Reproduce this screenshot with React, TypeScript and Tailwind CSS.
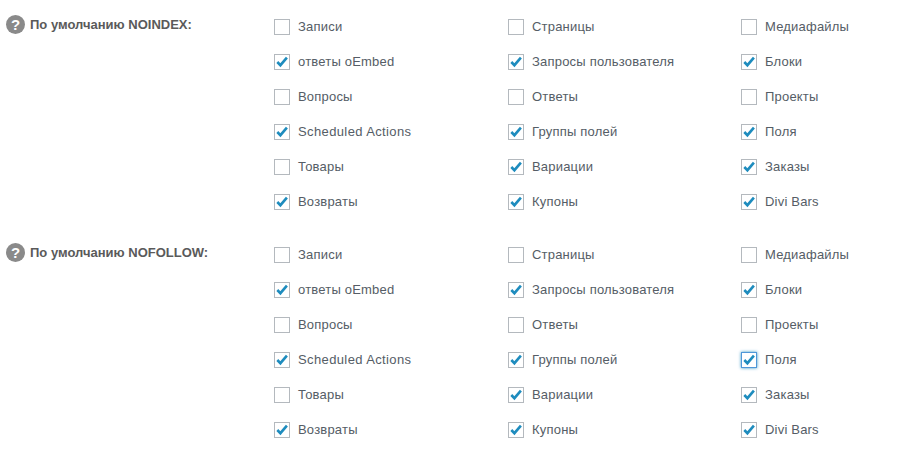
const rows: [string, boolean][][] = [
  [["Записи", false], ["Страницы", false], ["Медиафайлы", false]],
  [["ответы oEmbed", true], ["Запросы пользователя", true], ["Блоки", true]],
  [["Вопросы", false], ["Ответы", false], ["Проекты", false]],
  [["Scheduled Actions", true], ["Группы полей", true], ["Поля", true]],
  [["Товары", false], ["Вариации", true], ["Заказы", true]],
  [["Возвраты", true], ["Купоны", true], ["Divi Bars", true]],
];

function Check({ label, checked, focused }: { label: string; checked: boolean; focused?: boolean }) {
  return (
    <div className="flex items-center h-[35px]">
      <span
        className={
          focused
            ? "w-4 h-4 shrink-0 border border-[#4f97d8] shadow-[0_0_3px_rgba(30,140,190,0.9)] bg-white flex items-center justify-center"
            : "w-4 h-4 shrink-0 border border-[#b4b9be] bg-white flex items-center justify-center"
        }
      >
        {checked && (
          <svg width="14" height="14" viewBox="0 0 14 14">
            <path d="M2.3 7 L5.4 10.2 L11.9 2.6" fill="none" stroke="#1e8cbe" strokeWidth="2.6" />
          </svg>
        )}
      </span>
      <span
        className={
          label === "Scheduled Actions"
            ? "ml-2 text-[13px] tracking-[0.38px] text-[#555d66]"
            : "ml-2 text-[13px] tracking-[0.2px] text-[#555d66]"
        }
      >
        {label}
      </span>
    </div>
  );
}

function Section({ title, focusLast }: { title: string; focusLast?: boolean }) {
  return (
    <div className="flex h-[228px]">
      <div className="w-[274px] shrink-0 pl-[6px] pt-[15px] flex items-start gap-[5px]">
        <span className="w-[19px] h-[19px] rounded-full bg-[#8a8a8a] text-white text-[15px] font-bold leading-[19px] text-center">?</span>
        <span className="text-[13px] font-bold leading-[19px] text-[#5a5a5a]">{title}</span>
      </div>
      <div className="grid grid-cols-[234px_233px_1fr] content-start pt-[9px]">
        {rows.flat().map(([label, checked], i) => (
          <Check key={i} label={label} checked={checked} focused={focusLast && i === 11} />
        ))}
      </div>
    </div>
  );
}

export default function App() {
  return (
    <div className="w-[906px] h-[452px] overflow-hidden bg-white font-['Liberation_Sans',sans-serif]">
      <Section title="По умолчанию NOINDEX:" />
      <Section title="По умолчанию NOFOLLOW:" focusLast />
    </div>
  );
}
